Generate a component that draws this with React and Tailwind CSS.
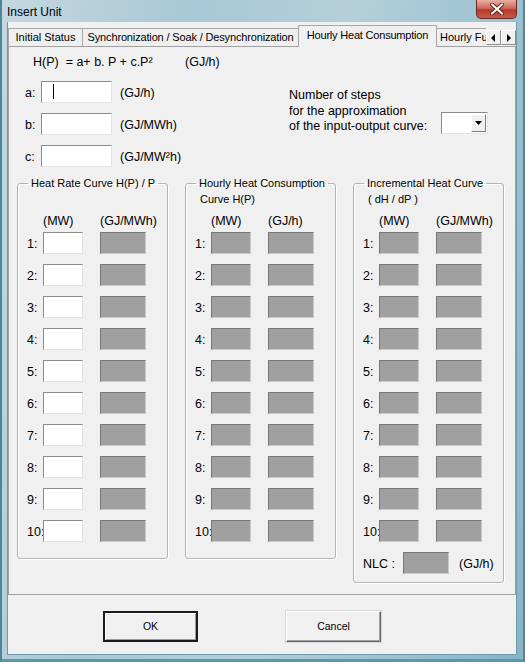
import React from 'react'

const font = "font-['Liberation_Sans',Arial,sans-serif]"

function WhiteBox({ className = '', children }) {
  return (
    <div className={`h-[22px] shrink-0 border border-[#8c8c8c] border-b-[#e3e3e3] border-r-[#e3e3e3] bg-white ${className}`}>
      {children}
    </div>
  )
}

function GrayBox({ className = '' }) {
  return (
    <div className={`h-[22px] shrink-0 border border-[#777] border-b-[#c9c9c9] border-r-[#c9c9c9] bg-[#a0a0a0] ${className}`} />
  )
}

function Group({ title, second, headers, editable, nlc }) {
  const rows = [1, 2, 3, 4, 5, 6, 7, 8, 9, 10]
  return (
    <fieldset className={`m-0 w-[151px] shrink-0 rounded-[3px] border border-[#b4b4b4] p-0 shadow-[inset_1px_1px_0_#fff,1px_1px_0_#fff] ${nlc ? 'pb-[8px]' : 'pb-[16px]'}`}>
      <legend className="ml-[10px] px-[3px] text-[11px] leading-[15px]">{title}</legend>
      <div className="h-[23px] pl-[14px] pt-[1px] text-[11px] leading-[15px]">{second}</div>
      <div className="flex h-[15px] pl-[25px] text-[12.5px] leading-[15px]">
        <span className="w-[57px]">{headers[0]}</span>
        <span>{headers[1]}</span>
      </div>
      <div className="mt-[3px] flex flex-col gap-[10px]">
        {rows.map((n) => (
          <div key={n} className="flex h-[22px] items-center">
            <span className="w-[25px] overflow-hidden whitespace-nowrap pl-[9px] pt-[3px] text-[12.5px]">{n}:</span>
            {editable ? <WhiteBox className="w-[40px]" /> : <GrayBox className="w-[40px]" />}
            <GrayBox className="ml-[17px] w-[46px]" />
          </div>
        ))}
      </div>
      {nlc && (
        <div className="mt-[10px] flex h-[22px] items-center text-[12.5px]">
          <span className="w-[49px] pl-[9px] pt-[3px]">NLC :</span>
          <GrayBox className="w-[46px]" />
          <span className="ml-[10px] pt-[3px]">(GJ/h)</span>
        </div>
      )}
    </fieldset>
  )
}

export default function App() {
  return (
    <div className={`flex h-[662px] w-[525px] flex-col overflow-hidden bg-[linear-gradient(100deg,#c4d8e1_0%,#a9c8d5_30%,#b4cfda_55%,#9cc2d1_80%,#86b5c6_100%)] text-black shadow-[inset_2px_0_0_#4d8797,inset_-2px_0_0_#4d8797,inset_0_-3px_0_#5c98a8] ${font}`}>
      {/* Title bar */}
      <div className="flex h-[22px] shrink-0 items-start">
        <span className="pl-[7px] pt-[5px] text-[12px] leading-[15px]">Insert Unit</span>
        <div className="ml-auto mr-[8px] flex h-[19px] w-[41px] items-center justify-center rounded-b-[5px] border border-t-0 border-[#6a2b22] bg-[linear-gradient(180deg,#e6b0a4_0%,#d06a5c_45%,#b8392a_55%,#c9584a_100%)]">
          <svg width="14" height="12" viewBox="0 0 14 12">
            <path d="M2 1.5 L12 10.5 M12 1.5 L2 10.5" stroke="#5a1d15" strokeWidth="4" strokeLinecap="round" />
            <path d="M2 1.5 L12 10.5 M12 1.5 L2 10.5" stroke="#fff" strokeWidth="2.2" strokeLinecap="round" />
          </svg>
        </div>
      </div>

      {/* Client */}
      <div className="ml-[7px] flex h-[633px] w-[510px] flex-col border-x border-b border-[#6f98a8] bg-[#f0f0f0]">
        {/* Tab strip */}
        <div className="flex h-[24px] shrink-0 items-end text-[11px]">
          <div className="flex h-[18px] w-[74px] items-center justify-center border-l border-t border-[#a7a7a7] bg-[#efefef]">Initial Status</div>
          <div className="flex h-[18px] w-[216px] items-center justify-center border-l border-t border-[#a7a7a7] bg-[#efefef] tracking-[-0.15px]">Synchronization / Soak / Desynchronization</div>
          <div className="relative z-10 -mb-[1px] flex h-[22px] w-[139px] items-center justify-center border-x border-t border-[#a7a7a7] bg-[#f0f0f0] pb-[2px] tracking-[-0.2px]">Hourly Heat Consumption</div>
          <div className="flex h-[18px] min-w-0 flex-1 items-center whitespace-nowrap border-t border-[#a7a7a7] bg-[#efefef] pl-[3px]">Hourly Fu</div>
          <div className="mb-[1px] flex self-end">
            <div className="flex h-[15px] w-[15px] items-center justify-center border border-[#8d8d8d] border-l-white border-t-white bg-[#f0f0f0]">
              <svg width="5" height="8" viewBox="0 0 5 8"><path d="M4 0 L0 4 L4 8 Z" fill="#000" /></svg>
            </div>
            <div className="flex h-[15px] w-[15px] items-center justify-center border border-[#8d8d8d] border-l-white border-t-white bg-[#f0f0f0]">
              <svg width="5" height="8" viewBox="0 0 5 8"><path d="M1 0 L5 4 L1 8 Z" fill="#000" /></svg>
            </div>
          </div>
        </div>

        {/* Tab page */}
        <div className="flex h-[549px] w-[508px] shrink-0 flex-col border border-[#a0a0a0] bg-[#f0f0f0]">
          <div className="mt-[8px] flex pl-[24px] text-[12.5px] leading-[15px]">
            <span className="w-[152px] whitespace-pre">H(P)  = a+ b. P + c.P²</span>
            <span>(GJ/h)</span>
          </div>

          <div className="mt-[11px] flex items-start">
            <div className="flex w-[280px] flex-col gap-[10px] text-[12.5px]">
              {[
                ['a:', '(GJ/h)'],
                ['b:', '(GJ/MWh)'],
                ['c:', '(GJ/MW²h)'],
              ].map(([l, u], i) => (
                <div key={l} className="flex h-[22px] items-center">
                  <span className="w-[32px] pl-[16px] pt-[3px]">{l}</span>
                  <WhiteBox className="w-[71px] pl-[11px] pt-[2px]">
                    {i === 0 && <span className="block h-[15px] w-[1px] bg-black" />}
                  </WhiteBox>
                  <span className="ml-[8px] pt-[3px]">{u}</span>
                </div>
              ))}
            </div>
            <div className="mt-[7px] flex items-end">
              <div className="w-[152px] text-[12.5px] leading-[15.5px]">
                <div>Number of steps</div>
                <div>for the approximation</div>
                <div className="whitespace-nowrap">of the input-output curve:</div>
              </div>
              <div className="mb-[1px] flex h-[22px] w-[47px] items-center justify-end border border-[#8c8c8c] border-b-[#e3e3e3] border-r-[#e3e3e3] bg-white pr-[1px]">
                <div className="flex h-[18px] w-[15px] items-center justify-center border border-[#7a7a7a] border-l-white border-t-white bg-[#f0f0f0]">
                  <svg width="7" height="4" viewBox="0 0 7 4"><path d="M0 0 L7 0 L3.5 4 Z" fill="#000" /></svg>
                </div>
              </div>
            </div>
          </div>

          <div className="mt-[9px] flex items-start gap-[17px] pl-[8px]">
            <Group title="Heat Rate Curve H(P) / P" second="" headers={['(MW)', '(GJ/MWh)']} editable />
            <Group title="Hourly Heat Consumption" second="Curve H(P)" headers={['(MW)', '(GJ/h)']} />
            <Group title="Incremental Heat Curve" second="( dH / dP )" headers={['(MW)', '(GJ/MWh)']} nlc />
          </div>
        </div>

        {/* Buttons */}
        <div className="flex flex-1 items-start gap-[88px] pl-[95px] pt-[16px] text-[10.5px]">
          <button className="flex h-[31px] w-[95px] items-center justify-center border-2 border-[#1b1b1b] bg-[#f0f0f0] shadow-[inset_1px_1px_0_#fff,inset_-1px_-1px_0_#9a9a9a]">
            OK
          </button>
          <button className="flex h-[31px] w-[95px] items-center justify-center border border-[#696969] border-l-[#fff] border-t-[#fff] bg-[#f0f0f0] shadow-[inset_-1px_-1px_0_#a0a0a0,0_0_0_1px_#d8d8d8]">
            Cancel
          </button>
        </div>
      </div>
    </div>
  )
}
